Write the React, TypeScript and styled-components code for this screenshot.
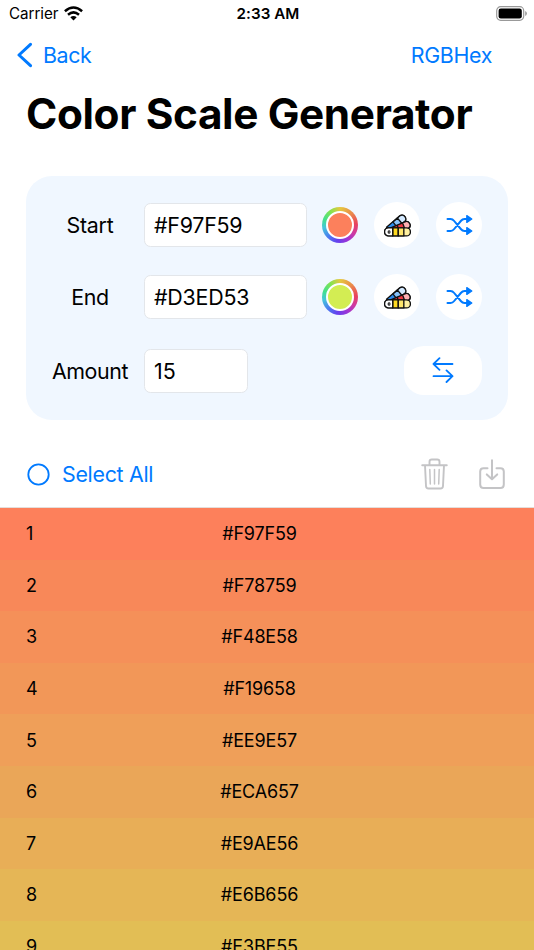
import React from 'react';
import styled, { createGlobalStyle } from 'styled-components';

const Global = createGlobalStyle`
  * { box-sizing: border-box; }
  body { margin: 0; background: #fff; }
`;

const BLUE = '#007aff';

const Screen = styled.main`
  width: 534px;
  height: 950px;
  overflow: hidden;
  display: flex;
  flex-direction: column;
  background: #fff;
  color: #000;
  font-family: Inter, "Liberation Sans", sans-serif;
  font-size: 21.4px;
`;

const Label = styled.span<{ $track?: number }>`
  letter-spacing: ${p => p.$track ?? 0}px;
  white-space: nowrap;
`;

const StatusBar = styled.header`
  height: 28px;
  flex: none;
  display: grid;
  grid-template-columns: 1fr auto 1fr;
  align-items: center;
  padding: 0 7px 0 9px;
  font-size: 15.2px;
  line-height: 28px;
  svg { display: block; }
`;

const Carrier = styled.div`
  display: flex;
  align-items: center;
  gap: 6px;
  svg { margin-top: -2px; }
`;

const Clock = styled.div`
  font-weight: 600;
  letter-spacing: 0.05px;
`;

const BatterySlot = styled.div`
  justify-self: end;
  margin-top: -2px;
`;

const NavBar = styled.nav`
  height: 54px;
  flex: none;
  display: flex;
  justify-content: space-between;
  align-items: center;
  padding: 0 42px 1px 17px;
  color: ${BLUE};
`;

const NavButton = styled.button`
  display: flex;
  align-items: center;
  gap: 10px;
  padding: 0;
  border: 0;
  background: none;
  color: inherit;
  font: inherit;
`;

const Title = styled.h1`
  margin: 0;
  height: 94px;
  flex: none;
  padding-left: 26px;
  font-size: 42.3px;
  line-height: 64px;
  font-weight: 700;
  letter-spacing: -0.37px;
  white-space: nowrap;
`;

const Panel = styled.section`
  margin: 0 26px;
  height: 244px;
  flex: none;
  padding: 26px 26px 0;
  border-radius: 26px;
  background: #f0f7ff;
`;

const Field = styled.div<{ $height: number; $top?: number }>`
  height: ${p => p.$height}px;
  margin-top: ${p => p.$top ?? 0}px;
  display: flex;
  align-items: flex-start;
`;

const FieldName = styled.div`
  width: 76px;
  height: 46px;
  margin-right: 16px;
  display: flex;
  align-items: center;
  justify-content: center;
`;

const TextBox = styled.div<{ $width: number }>`
  width: ${p => p.$width}px;
  height: 44px;
  margin-top: 1px;
  padding: 0 0 0 9px;
  display: flex;
  align-items: center;
  border: 1px solid #e3e6ea;
  border-radius: 6.5px;
  background: #fff;
`;

const Well = styled.div`
  width: 36px;
  height: 36px;
  margin: 5px 16px 0 15px;
  display: grid;
  place-items: center;
  border-radius: 50%;
  background: conic-gradient(#e5c83f, #ea8a4b 45deg, #e9435c 85deg, #d03aa0 120deg, #9a35d8 155deg, #6540ee 190deg, #4b7cf0 225deg, #45c4dc 260deg, #42e08c 290deg, #84e350 325deg, #e5c83f);
`;

const Swatch = styled.div<{ $color: string }>`
  width: 28px;
  height: 28px;
  border: 2.5px solid #fff;
  border-radius: 50%;
  background: ${p => p.$color};
`;

const RoundButton = styled.button`
  width: 46px;
  height: 46px;
  margin-right: 16px;
  padding: 0;
  display: grid;
  place-items: center;
  border: 0;
  border-radius: 50%;
  background: #fff;
  &:last-child { margin-right: 0; }
`;

const SwapButton = styled.button`
  width: 78px;
  height: 49px;
  margin: -2px 0 0 auto;
  padding: 0 0 1px;
  display: grid;
  place-items: center;
  border: 0;
  border-radius: 20px;
  background: #fff;
`;

const Toolbar = styled.div`
  height: 88px;
  flex: none;
  display: flex;
  align-items: center;
  padding: 21px 29px 0 27px;
  color: ${BLUE};
  border-bottom: 1px solid #e4dedb;
`;

const SelectAll = styled.button`
  display: flex;
  align-items: center;
  gap: 12px;
  margin-right: auto;
  padding: 0;
  border: 0;
  background: none;
  color: inherit;
  font: inherit;
`;

const Tools = styled.div`
  display: flex;
  align-items: center;
  gap: 31px;
`;

const List = styled.div`
  flex: 1;
  overflow: hidden;
`;

const Row = styled.div<{ $color: string }>`
  height: 51.6px;
  display: grid;
  grid-template-columns: 168.5px 130px;
  align-items: center;
  padding-left: 26px;
  background: ${p => p.$color};
  font-size: 18px;
`;

const Hex = styled.div`
  text-align: center;
  letter-spacing: -0.15px;
`;

const Wifi = () => (
  <svg width="19" height="15" viewBox="0 0 19 15">
    <path d="M.9 5.3Q9.5-2.3 18.1 5.3M4 8.7Q9.5 4 15 8.7" fill="none" stroke="#000" strokeWidth="2.5" />
    <path d="M6.3 11.3Q9.5 8.6 12.7 11.3L9.5 14.6Z" />
  </svg>
);

const Battery = () => (
  <svg width="31" height="15" viewBox="0 0 31 15">
    <rect x=".7" y=".7" width="27" height="13.6" rx="4" fill="none" stroke="#999" strokeWidth="1.2" />
    <rect x="2.6" y="2.6" width="23.2" height="9.8" rx="2.2" />
    <path d="M29.2 5v5q1.7-.8 1.7-2.5T29.2 5" fill="#999" />
  </svg>
);

const Fan = () => (
  <svg width="27" height="23" viewBox="0 0 28 24" stroke="#101010" strokeWidth="1.4" strokeLinejoin="round">
    <path d="M2.5 13.8 16.2 2.2a3.9 3.9 0 0 1 5 6L8 19Z" fill="#2d8cec" />
    <path d="m13.2 4.9 3-2.7a3.9 3.9 0 0 1 5 6l-3 2.4Z" fill="#d3e9ff" />
    <path d="m9.2 8.3 4.8-4 4.9 5.9-5 4Z" fill="#87c3fa" />
    <path d="M5 15.2 21.8 8.1a3.9 3.9 0 0 1 3.2 7.1L9 21Z" fill="#ee3843" />
    <path d="m19.2 9.2 2.6-1.1a3.9 3.9 0 0 1 3.2 7.1l-3 1.2Z" fill="#ffb0b3" />
    <path d="m13.5 11.6 3 7.2" />
    <path d="M4.7 14.5h18.6a4.1 4.1 0 0 1 0 8.4H4.7a4.1 4.1 0 0 1 0-8.4Z" fill="#fff0a0" />
    <path d="M9 14.5h5.8v8.4H9Z" fill="#ffda20" />
    <path d="M14.8 14.5h5.8v8.4h-5.8Z" fill="#ffe66b" />
    <path d="M4.7 14.5H9v8.4H4.7a4.1 4.1 0 0 1 0-8.4Z" fill="#fff" />
    <ellipse cx="5.2" cy="18.7" rx="1" ry="1.3" fill="#fff" strokeWidth="1.1" />
  </svg>
);

const Shuffle = () => (
  <svg width="27" height="22" viewBox="0 0 27 22" fill="none" stroke={BLUE} strokeWidth="2" strokeLinecap="round" strokeLinejoin="round">
    <path d="M1.5 5H4.5q2.1 0 3.7 2l6.6 8q1.7 2 3.7 2h3M1.5 17H4.5q2.1 0 3.7-2l6.600-8q1.7-2 3.7-2h3" />
    <path d="M20.8 1.6v6.8L25.8 5ZM20.8 13.6v6.8l5-3.4Z" fill={BLUE} strokeWidth="1.3" />
  </svg>
);

const Swap = () => (
  <svg width="22" height="26" viewBox="0 0 22 26" fill="none" stroke={BLUE} strokeWidth="1.8" strokeLinecap="round" strokeLinejoin="round">
    <path d="M20.5 7H1.5M7.5 1.2 1.5 7l6 5.8M1.5 19.2h19M14.5 13.4l6 5.8-6 5.8" />
  </svg>
);

const Trash = () => (
  <svg width="27" height="32" viewBox="0 0 27 32" fill="none" stroke="#c4c4c6" strokeWidth="1.9" strokeLinecap="round" strokeLinejoin="round">
    <path d="M1.2 7.2h24.6M8.5 7V3.8Q8.5 1.5 10.8 1.5h5.4q2.3 0 2.3 2.3V7M4 7.2l1 20.8q.1 2.5 2.5 2.5h12q2.4 0 2.5-2.5L23 7.2" />
    <path d="m8.8 11.5.5 14.5M13.5 11.5V26M18.2 11.5l-.5 14.5" strokeWidth="1.5" />
  </svg>
);

const Download = () => (
  <svg width="26" height="31" viewBox="0 0 26 31" fill="none" stroke="#c4c4c6" strokeWidth="2" strokeLinecap="round" strokeLinejoin="round">
    <path d="M8.5 9.2H4.6Q1.2 9.2 1.2 12.6v13q0 3.5 3.4 3.5h16.8q3.4 0 3.4-3.5v-13q0-3.4-3.4-3.4h-3.9M13 1.2V20M7.8 15.4 13 20.3l5.2-4.9" />
  </svg>
);

type ColorFieldProps = { name: string; value: string; color: string; nameTrack: number; valueTrack: number };

const ColorField = ({ name, value, color, nameTrack, valueTrack }: ColorFieldProps) => (
  <Field $height={72}>
    <FieldName><Label $track={nameTrack}>{name}</Label></FieldName>
    <TextBox $width={163}><Label $track={valueTrack}>{value}</Label></TextBox>
    <Well><Swatch $color={color} /></Well>
    <RoundButton aria-label="Palette"><Fan /></RoundButton>
    <RoundButton aria-label="Shuffle"><Shuffle /></RoundButton>
  </Field>
);

const scale: [string, string][] = [
  ['#F97F59', '#fd805b'],
  ['#F78759', '#f88859'],
  ['#F48E58', '#f59059'],
  ['#F19658', '#f29758'],
  ['#EE9E57', '#ef9f59'],
  ['#ECA657', '#eaa658'],
  ['#E9AE56', '#e8ae57'],
  ['#E6B656', '#e5b656'],
  ['#E3BE55', '#e2be55'],
];

export default function App() {
  return (
    <Screen>
      <Global />
      <StatusBar>
        <Carrier><Label $track={-0.05}>Carrier</Label><Wifi /></Carrier>
        <Clock>2:33 AM</Clock>
        <BatterySlot><Battery /></BatterySlot>
      </StatusBar>
      <NavBar>
        <NavButton>
          <svg width="16" height="26" viewBox="0 0 16 26" fill="none" stroke={BLUE} strokeWidth="3" strokeLinecap="round" strokeLinejoin="round">
            <path d="M13.5 2.3 2 13l11.5 10.7" />
          </svg>
          <Label $track={-0.4}>Back</Label>
        </NavButton>
        <NavButton><Label $track={-0.35}>RGBHex</Label></NavButton>
      </NavBar>
      <Title>Color Scale Generator</Title>
      <Panel>
        <ColorField name="Start" value="#F97F59" color="#fc805c" nameTrack={-0.2} valueTrack={-0.25} />
        <ColorField name="End" value="#D3ED53" color="#d3ed53" nameTrack={-0.3} valueTrack={-0.2} />
        <Field $height={50} $top={2}>
          <FieldName><Label $track={-0.4}>Amount</Label></FieldName>
          <TextBox $width={104}><Label>15</Label></TextBox>
          <SwapButton aria-label="Swap"><Swap /></SwapButton>
        </Field>
      </Panel>
      <Toolbar>
        <SelectAll>
          <svg width="23" height="23" viewBox="0 0 23 23">
            <circle cx="11.5" cy="11.5" r="10.2" fill="none" stroke={BLUE} strokeWidth="1.8" />
          </svg>
          <Label $track={-0.3}>Select All</Label>
        </SelectAll>
        <Tools><Trash /><Download /></Tools>
      </Toolbar>
      <List>
        {scale.map(([hex, color], i) => (
          <Row key={hex} $color={color}>
            <span>{i + 1}</span>
            <Hex>{hex}</Hex>
          </Row>
        ))}
      </List>
    </Screen>
  );
}
